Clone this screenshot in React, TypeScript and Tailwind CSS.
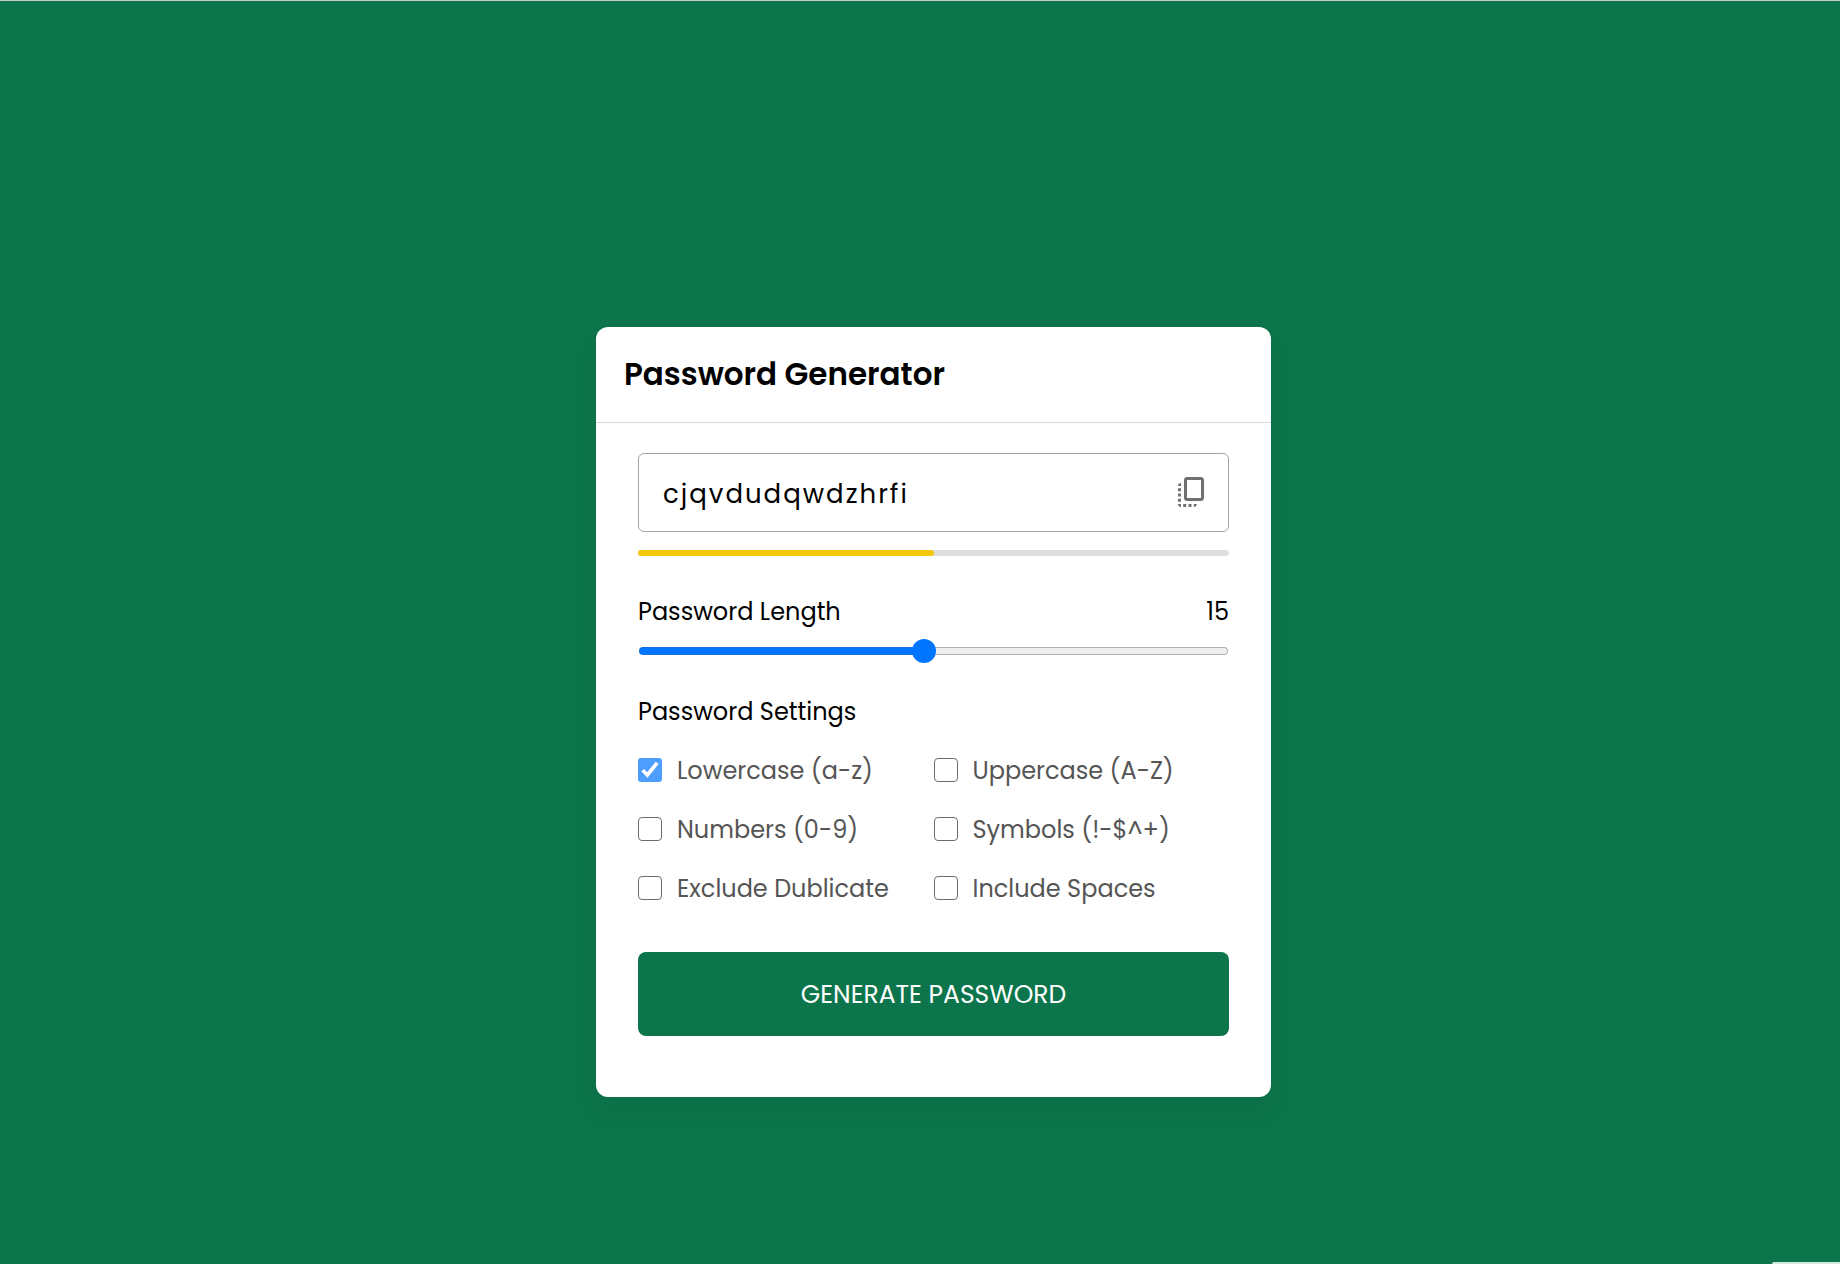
import { useState } from "react";
import type { CSSProperties } from "react";

const OPTIONS = [
  { id: "lowercase", label: "Lowercase (a-z)" },
  { id: "uppercase", label: "Uppercase (A-Z)" },
  { id: "numbers", label: "Numbers (0-9)" },
  { id: "symbols", label: "Symbols (!-$^+)" },
  { id: "exclude", label: "Exclude Dublicate" },
  { id: "spaces", label: "Include Spaces" },
];

const MIN = 1;
const MAX = 30;

function CopyIcon() {
  return (
    <svg viewBox="0 0 36 35" className="h-[35px] w-9" fill="currentColor" aria-hidden="true">
      <rect x="11.5" y="3.5" width="17" height="21" rx="1.8" fill="none" stroke="currentColor" strokeWidth="3" />
      <path d="M7 8v3H4c0-1.7 1.3-3 3-3ZM4 13.2h3v3H4ZM4 18.5h3v3H4ZM4 23.8h3v3H4ZM4 29h3v3c-1.7 0-3-1.3-3-3ZM9.2 29h3v3h-3ZM14.5 29h3v3h-3ZM19.8 29h3c0 1.7-1.3 3-3 3Z" />
    </svg>
  );
}

function LengthSlider({ value, onChange }: { value: number; onChange: (n: number) => void }) {
  const fill = { "--fill": `${((value - MIN) / (MAX - MIN)) * 100}%` } as CSSProperties;
  return (
    <input
      id="length"
      type="range"
      min={MIN}
      max={MAX}
      value={value}
      onChange={(e) => onChange(Number(e.target.value))}
      style={fill}
      className="mt-[11px] block h-6 w-full cursor-pointer appearance-none bg-transparent px-px [&::-webkit-slider-runnable-track]:h-2 [&::-webkit-slider-runnable-track]:rounded-full [&::-webkit-slider-runnable-track]:border [&::-webkit-slider-runnable-track]:border-transparent [&::-webkit-slider-runnable-track]:[background:linear-gradient(90deg,#0075ff_var(--fill),#efefef_var(--fill))_padding-box,linear-gradient(90deg,#1470dc_var(--fill),#b2b2b2_var(--fill))_border-box] [&::-webkit-slider-thumb]:-mt-[9px] [&::-webkit-slider-thumb]:size-6 [&::-webkit-slider-thumb]:appearance-none [&::-webkit-slider-thumb]:rounded-full [&::-webkit-slider-thumb]:bg-[#0075ff]"
    />
  );
}

function Option({ id, label, checked, onToggle }: { id: string; label: string; checked: boolean; onToggle: () => void }) {
  return (
    <li className="flex items-start gap-[15px]">
      <span className="mt-0.5 grid size-6 shrink-0">
        <input
          id={id}
          type="checkbox"
          checked={checked}
          onChange={onToggle}
          className="col-start-1 row-start-1 size-6 cursor-pointer appearance-none rounded-[4px] border border-[#6c6c6c] bg-white checked:rounded-[3px] checked:border-0 checked:bg-[#4d9eff]"
        />
        {checked && (
          <svg viewBox="0 0 24 24" className="pointer-events-none col-start-1 row-start-1 size-6" fill="none" stroke="white" strokeWidth="3.6" aria-hidden="true">
            <path d="M4.7 12.3 9.4 17 19.2 4.8" />
          </svg>
        )}
      </span>
      <label htmlFor={id} className="cursor-pointer whitespace-nowrap text-2xl leading-[30px] font-normal text-[#555]">
        {label}
      </label>
    </li>
  );
}

export default function App() {
  const [length, setLength] = useState(15);
  const [password, setPassword] = useState("cjqvdudqwdzhrfi");
  const [selected, setSelected] = useState<string[]>(["lowercase"]);

  const toggle = (id: string) =>
    setSelected((s) => (s.includes(id) ? s.filter((x) => x !== id) : [...s, id]));

  const generate = () => {
    const chars = "abcdefghijklmnopqrstuvwxyz";
    setPassword(Array.from({ length }, () => chars[Math.floor(Math.random() * chars.length)]).join(""));
  };

  return (
    <div className="relative flex min-h-screen items-center justify-center border-t border-[#c6cdc9] bg-[#0c754b] pt-[159px] pl-[27px] font-['Poppins','Inter',sans-serif] text-black">
      <main className="w-full max-w-[675px] rounded-xl bg-white shadow-[0_15px_30px_rgba(0,0,0,0.06)]">
        <h1 className="border-b border-[#d4dbe5] px-7 pt-[26px] pb-[27px] text-[31px] leading-[42px] font-semibold">Password Generator</h1>
        <div className="px-[42px] pt-[30px] pb-[61px]">
          <div className="flex h-[79px] items-center rounded-md border border-[#a5a5a5] pr-[18px] pl-6">
            <input
              type="text"
              aria-label="Generated password"
              readOnly
              value={password}
              className="min-w-0 flex-1 bg-transparent pt-0.5 text-[26px] leading-8 font-normal tracking-[2px] outline-none"
            />
            <button type="button" aria-label="Copy password" onClick={() => navigator.clipboard?.writeText(password)} className="cursor-pointer text-[#707070]">
              <CopyIcon />
            </button>
          </div>
          <div className="mt-[18px] h-1.5 rounded-full bg-[#dfdfdf]">
            <div className="h-full w-1/2 rounded-full bg-[#f1c80b]" />
          </div>
          <div className="mt-10 flex items-center justify-between text-2xl leading-8 font-normal">
            <label htmlFor="length">Password Length</label>
            <output htmlFor="length">{length}</output>
          </div>
          <LengthSlider value={length} onChange={setLength} />
          <h2 className="mt-[33px] text-2xl leading-8 font-normal">Password Settings</h2>
          <ul className="mt-7 grid grid-cols-2 gap-y-[29px]">
            {OPTIONS.map((o) => (
              <Option key={o.id} {...o} checked={selected.includes(o.id)} onToggle={() => toggle(o.id)} />
            ))}
          </ul>
          <button type="button" onClick={generate} className="mt-12 h-[84px] w-full cursor-pointer rounded-lg bg-[#0c754b] pt-0.5 text-[25px] leading-8 text-white uppercase">
            Generate Password
          </button>
        </div>
      </main>
      <div className="absolute right-0 bottom-0 h-0.5 w-[68px] rounded-tl-sm bg-[#d5e8df]" />
    </div>
  );
}
